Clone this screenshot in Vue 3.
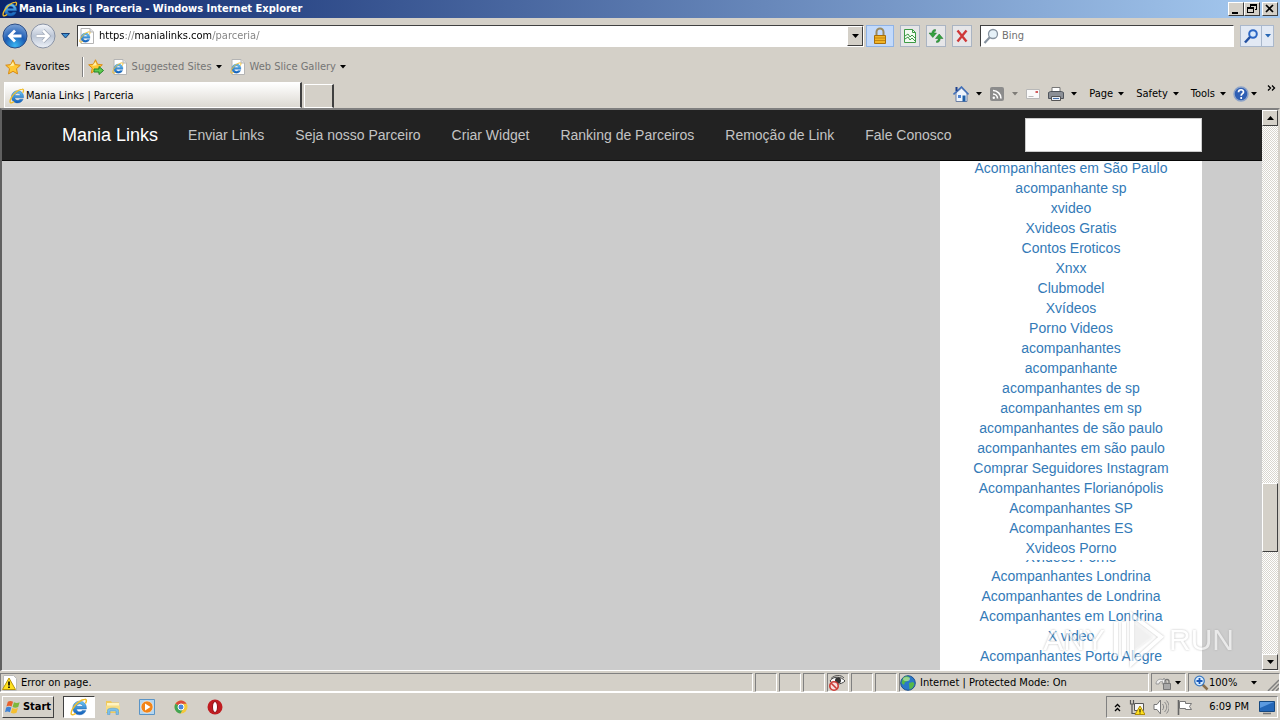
<template>
  <div class="window">
    <svg class="defs" aria-hidden="true">
      <defs>
        <linearGradient id="blueRing" x1="0" y1="0" x2="0" y2="1">
          <stop offset="0" stop-color="#6cc8f4" />
          <stop offset="1" stop-color="#0f5cb8" />
        </linearGradient>
        <radialGradient id="backFill" cx="0.5" cy="0.9" r="0.9">
          <stop offset="0" stop-color="#39b6f2" />
          <stop offset="0.5" stop-color="#1c5cb4" />
          <stop offset="1" stop-color="#7fa5d8" />
        </radialGradient>
        <linearGradient id="fwdFill" x1="0" y1="0" x2="0" y2="1">
          <stop offset="0" stop-color="#f4f6fa" />
          <stop offset="0.5" stop-color="#bcc6d6" />
          <stop offset="1" stop-color="#eef2f8" />
        </linearGradient>
        <symbol id="ie" viewBox="0 0 16 16">
          <path
            d="M14.600 9.800H5.800c.1 1.600 1.200 2.500 2.800 2.500 1.100 0 1.800-.4 2.200-1.100h3.300c-.8 2.400-2.900 3.700-5.500 3.700-3.700 0-6.100-2.500-6.100-6s2.600-6.100 6.100-6.100c3.700 0 6.200 2.700 6 7zM5.900 7.400h5.500c-.1-1.300-1.200-2.100-2.700-2.100S6.100 6.100 5.900 7.400z"
            fill="url(#blueRing)"
            stroke="#1a62b0"
            stroke-width="0.400"
          />
          <path
            d="M13.700 4.900c1.300-2.300 1.200-4-.6-3.800C9.500 1.400 4.300 5.800 2.200 9.900c-1.700 3.200-1.500 5.300.2 5 .8-.1 1.800-.6 2.700-1.300"
            fill="none"
            stroke="#f0bd2c"
            stroke-width="1.300"
          />
        </symbol>
        <symbol id="iePage" viewBox="0 0 16 16">
          <path d="M2 .5h9l3.500 3.500v11.500H2z" fill="#fff" stroke="#b4b4b4" />
          <path d="M11 .5V4h3.500" fill="#e4e4e4" stroke="#b4b4b4" />
          <use href="#ie" x="0" y="3" width="12" height="12" />
        </symbol>
        <symbol id="star" viewBox="0 0 16 16">
          <path
            d="M8 .8l2.200 4.800 5.100.6-3.800 3.500 1 5.200L8 12.300l-4.500 2.600 1-5.200L.7 6.200l5.100-.6z"
            fill="#ffc936"
            stroke="#d98a13"
          />
          <path d="M8 3l1.300 3.600-4.700.7z" fill="#fff0a8" />
        </symbol>
      </defs>
    </svg>

    <header class="title-bar">
      <svg class="icon16"><use href="#ie" /></svg>
      <h1>Mania Links | Parceria - Windows Internet Explorer</h1>
      <div class="win-buttons">
        <button type="button" aria-label="Minimize">
          <svg viewBox="0 0 14 12"><path d="M3 9h6v2H3z" /></svg>
        </button>
        <button type="button" aria-label="Restore">
          <svg viewBox="0 0 14 12">
            <path d="M5 1h7v6h-2V6h1V3H6v1H5zM2 4h7v6H2zm1 2v3h5V6z" fill-rule="evenodd" />
          </svg>
        </button>
        <button type="button" class="close" aria-label="Close">
          <svg viewBox="0 0 14 12">
            <path d="M3 2l7 7M10 2l-7 7" stroke="#000" stroke-width="1.700" />
          </svg>
        </button>
      </div>
    </header>

    <div class="address-row">
      <div class="travel">
        <button type="button" class="round" aria-label="Back">
          <svg viewBox="0 0 26 26">
            <circle cx="13" cy="13" r="12" fill="url(#backFill)" stroke="#2b4d86" />
            <path d="M19.500 13H8M13 7.500L7.500 13l5.500 5.500" fill="none" stroke="#fff" stroke-width="2.800" />
          </svg>
        </button>
        <button type="button" class="round" aria-label="Forward">
          <svg viewBox="0 0 26 26">
            <circle cx="13" cy="13" r="12" fill="url(#fwdFill)" stroke="#8992a4" />
            <path d="M6.500 13H18M13 7.500l5.500 5.500-5.500 5.500" fill="none" stroke="#a0a9b8" stroke-width="4" />
            <path d="M6.500 13H18M13 7.500l5.500 5.500-5.500 5.500" fill="none" stroke="#fff" stroke-width="2.500" />
          </svg>
        </button>
        <button type="button" class="recent" aria-label="Recent pages">
          <svg viewBox="0 0 9 6"><path d="M.5.5h8L4.500 5z" fill="#3c8fd0" stroke="#173e74" /></svg>
        </button>
      </div>

      <div class="address">
        <svg class="icon16"><use href="#iePage" /></svg>
        <input v-model="url" type="text" aria-label="Address" />
        <button type="button" class="combo" aria-label="Show addresses">
          <svg class="caret"><path d="M0 0h7L3.500 4z" /></svg>
        </button>
      </div>
      <button type="button" class="lock" aria-label="Security report">
        <svg viewBox="0 0 16 18">
          <path d="M4.500 9V5a3.500 3.500 0 017 0v4" fill="none" stroke="#9a8a60" stroke-width="2" />
          <path d="M2.500 8.500h11v8h-11z" fill="#f0b428" stroke="#a86f0c" />
          <path d="M3 11h10M3 13.500h10" stroke="#c4860f" />
        </svg>
      </button>
      <button type="button" class="tool" aria-label="Compatibility view">
        <svg viewBox="0 0 16 16">
          <path d="M2.500 1.500h8l3 3v10h-11z" fill="#f2fbf2" stroke="#3c9a45" />
          <path d="M10.500 1.500v3h3M3 8l3-2 2 3 2-2 3 3M3 11l3-2 2 3 2-2 3 3" fill="none" stroke="#3c9a45" />
        </svg>
      </button>
      <button type="button" class="tool" aria-label="Refresh">
        <svg viewBox="0 0 16 16">
          <path d="M7.500 1.500C5 1.500 4 3 4 5H1l3.800 4.500L8.500 5H6c0-1.200.5-1.800 1.500-1.800z" fill="#35a23f" stroke="#1d7228" stroke-width="0.500" />
          <path d="M8.500 14.500c2.500 0 3.700-1.500 3.700-4H15L11.200 6l-3.700 4.500h2.700c0 1.600-.5 2.400-1.700 2.400z" fill="#35a23f" stroke="#1d7228" stroke-width="0.500" />
        </svg>
      </button>
      <button type="button" class="tool" aria-label="Stop">
        <svg viewBox="0 0 16 16">
          <path d="M3.500 2.500l9 11M12.500 2.500l-9 11" stroke="#cf3838" stroke-width="2.400" />
        </svg>
      </button>
      <div class="search">
        <svg class="icon16" viewBox="0 0 16 16">
          <circle cx="10" cy="6" r="4.500" fill="#e6f1f8" stroke="#8793a0" stroke-width="1.300" />
          <path d="M6.800 9.200L1.500 15" stroke="#8793a0" stroke-width="2.200" />
        </svg>
        <input v-model="query" type="text" placeholder="Bing" aria-label="Search Bing" />
      </div>
      <div class="search-buttons">
        <button type="button" class="go" aria-label="Search">
          <svg viewBox="0 0 16 16">
            <circle cx="10" cy="6" r="3.800" fill="#d7e8fb" stroke="#2b66c4" stroke-width="2" />
            <path d="M7 9l-5 5.500" stroke="#2350a0" stroke-width="2.500" />
          </svg>
        </button>
        <button type="button" class="go-menu" aria-label="Search options">
          <svg class="caret small"><path d="M0 0h6L3 3.500z" fill="#2867b4" /></svg>
        </button>
      </div>
    </div>

    <div class="favorites-bar">
      <button type="button" class="fav">
        <svg class="icon16"><use href="#star" /></svg>Favorites
      </button>
      <span class="divider"></span>
      <button type="button" class="add-fav" aria-label="Add to Favorites bar">
        <svg class="icon16" viewBox="0 0 16 16">
          <use href="#star" width="15" height="15" />
          <path d="M6 10h5V7.500l4.500 4-4.500 4V13H6z" fill="#5ecb4f" stroke="#23842a" />
        </svg>
      </button>
      <a v-for="name in favorites" :key="name" href="#" class="fav-link" @click.prevent>
        <svg class="icon16"><use href="#iePage" /></svg>
        <span>{{ name }}</span>
        <svg class="caret small"><path d="M0 0h6L3 3.500z" /></svg>
      </a>
    </div>

    <div class="tab-row">
      <button type="button" class="tab">
        <svg class="icon16"><use href="#ie" /></svg>Mania Links | Parceria
      </button>
      <button type="button" class="new-tab" aria-label="New tab"></button>
      <div class="command-bar">
        <button type="button" aria-label="Home">
          <svg class="icon16" viewBox="0 0 16 16">
            <path d="M3 7v8.500h11V7L8.500 2z" fill="#eef4fc" stroke="#6a7ea4" />
            <path d="M.5 8.500L8.500 1l7 7.500" fill="none" stroke="#4370b8" stroke-width="1.600" />
            <path d="M2.500 1h2v4h-2z" fill="#1d3f8c" />
            <path d="M5 9h3v3H5z" fill="#4e83d0" />
            <path d="M9.500 9.500h3v6h-3z" fill="#1d5fa8" />
          </svg>
          <svg class="caret small"><path d="M0 0h6L3 3.500z" /></svg>
        </button>
        <button type="button" aria-label="Feeds">
          <svg class="icon16" viewBox="0 0 16 16">
            <rect x="1" y="1" width="14" height="14" rx="2" fill="#8c8c8c" />
            <path d="M4 4.500a8 8 0 018 8M4 8a4.500 4.500 0 014.500 4.500" fill="none" stroke="#fff" stroke-width="1.600" />
            <circle cx="4.800" cy="11.800" r="1.200" fill="#fff" />
          </svg>
          <svg class="caret small off"><path d="M0 0h6L3 3.500z" /></svg>
        </button>
        <button type="button" class="mail" aria-label="Read mail">
          <svg class="icon16" viewBox="0 0 16 16">
            <path d="M1.500 3.500h13v9h-13z" fill="#fafafa" stroke="#b8b8b8" />
            <path d="M10.500 5h2.500v2h-2.500z" fill="#d25c5c" />
            <path d="M3.500 10.500h5" stroke="#bbb" />
          </svg>
        </button>
        <button type="button" aria-label="Print">
          <svg class="icon16" viewBox="0 0 16 16">
            <path d="M4 1.500h8V6H4z" fill="#fff" stroke="#777" />
            <path d="M.5 6.500l2-1h11l2 1v6H.5z" fill="#8b8f96" stroke="#4f545c" />
            <path d="M3.500 10.500h9v4h-9z" fill="#e8eef6" stroke="#555" />
            <path d="M5 12.500h6" stroke="#456ea8" />
          </svg>
          <svg class="caret small"><path d="M0 0h6L3 3.500z" /></svg>
        </button>
        <button v-for="m in menus" :key="m" type="button" class="menu">
          <span>{{ m }}</span>
          <svg class="caret small"><path d="M0 0h6L3 3.500z" /></svg>
        </button>
        <button type="button" class="help" aria-label="Help">
          <svg class="icon16" viewBox="0 0 16 16">
            <circle cx="8" cy="8" r="7" fill="#2f5fb4" stroke="#8da3c8" stroke-width="1.500" />
            <path d="M5.500 6.200C5.600 3 10.600 3 10.500 6c0 1.700-2.300 1.700-2.300 3.800M8.200 11v2" fill="none" stroke="#fff" stroke-width="1.700" />
          </svg>
          <svg class="caret small"><path d="M0 0h6L3 3.500z" /></svg>
        </button>
        <button type="button" class="more" aria-label="More commands">
          <svg viewBox="0 0 9 6">
            <path d="M1 .5L3.500 3 1 5.500M5 .5L7.500 3 5 5.500" fill="none" stroke="#000" stroke-width="1.300" />
          </svg>
        </button>
      </div>
    </div>

    <div class="viewport">
      <main class="page">
        <nav class="navbar">
          <div class="container">
            <a href="#" class="brand" @click.prevent>Mania Links</a>
            <div class="nav-links">
              <a v-for="l in navLinks" :key="l" href="#" @click.prevent>{{ l }}</a>
            </div>
            <input v-model="siteQuery" type="text" class="site-search" aria-label="Buscar" />
          </div>
        </nav>
        <div class="container content">
          <aside class="partners">
            <a v-for="(p, i) in partners" :key="i" href="#" @click.prevent>{{ p }}</a>
            <div class="sliver"><a href="#" @click.prevent>Xvideos Porno</a></div>
            <a v-for="p in morePartners" :key="p" href="#" @click.prevent>{{ p }}</a>
          </aside>
        </div>
        <div class="watermark">
          <span>ANY</span>
          <svg viewBox="0 0 56 60">
            <path d="M7 12v34M15 12v34M23 5l29 22-29 26z" fill="none" stroke="#fff" stroke-width="4" />
            <path d="M25 12l19 15-19 14z" fill="#fff" opacity="0.500" />
          </svg>
          <span>RUN</span>
        </div>
      </main>
      <div class="scrollbar">
        <button type="button" aria-label="Scroll up">
          <svg class="caret"><path d="M0 4h7L3.500 0z" /></svg>
        </button>
        <span class="before"></span>
        <span class="thumb"></span>
        <span class="after"></span>
        <button type="button" aria-label="Scroll down">
          <svg class="caret"><path d="M0 0h7L3.500 4z" /></svg>
        </button>
      </div>
    </div>

    <footer class="status-bar">
      <div class="cell message">
        <svg class="icon16" viewBox="0 0 16 16">
          <path d="M1.500.5h10l3 3v12h-13z" fill="#fff" stroke="#bbb" />
          <path d="M7 3l6.500 11.500H.5z" fill="#ffe11e" stroke="#b89408" />
          <path d="M7 6.500v4M7 11.500v1.500" stroke="#000" stroke-width="1.600" />
        </svg>
        Error on page.
      </div>
      <div class="cell blank"></div>
      <div class="cell blank"></div>
      <div class="cell blank"></div>
      <div class="cell blank">
        <svg class="icon18" viewBox="0 0 18 16">
          <path d="M2 6c3-5 11-5 15 0-4 4-11 4-15 0z" fill="#fff" stroke="#444" />
          <circle cx="10" cy="5.500" r="3" fill="#333" />
          <path d="M3 3.500C7-.5 13-.5 16 3" fill="none" stroke="#555" />
          <circle cx="6" cy="11" r="4.200" fill="#f7dcdc" stroke="#cc3b35" stroke-width="1.600" />
          <path d="M3.200 8.200l5.600 5.600" stroke="#cc3b35" stroke-width="1.600" />
        </svg>
      </div>
      <div class="cell blank"></div>
      <div class="cell blank"></div>
      <div class="cell zone">
        <svg class="icon16" viewBox="0 0 16 16">
          <circle cx="8" cy="8" r="7.300" fill="#2a78c8" stroke="#1c4f8e" />
          <path d="M3 3c3-3 6-1.500 7 0L8 6 5 7 4 10 1.500 8zM9 8l4-1 1.500 2-2 4-3 1.500z" fill="#56b848" />
          <ellipse cx="6.500" cy="4" rx="3.500" ry="2" fill="#fff" opacity="0.400" />
        </svg>
        Internet | Protected Mode: On
      </div>
      <div class="cell privacy">
        <svg class="icon18" viewBox="0 0 18 16">
          <path d="M1 9c0-4 4-6 7-4l1-2 3 5-5 1 1-2C6 6 4 7 4 9z" fill="#f0f0f0" stroke="#999" />
          <path d="M8.500 8.500h7v6h-7z" fill="#a8a8a8" stroke="#777" />
          <path d="M10 8V6.500a2 2 0 014 0V8" fill="none" stroke="#777" stroke-width="1.300" />
        </svg>
        <svg class="caret small"><path d="M0 0h6L3 3.500z" /></svg>
      </div>
      <div class="cell zoom">
        <svg class="icon16" viewBox="0 0 16 16">
          <path d="M9 9l5.500 5.500" stroke="#8a6f4c" stroke-width="2.500" />
          <circle cx="6.500" cy="6" r="4.800" fill="#d8ecff" stroke="#3d7ac0" stroke-width="1.300" />
          <path d="M3.500 6h6M6.500 3v6" stroke="#1a58b8" stroke-width="1.800" />
        </svg>
        <span>100%</span>
        <svg class="caret small"><path d="M0 0h6L3 3.500z" /></svg>
        <svg class="grip" viewBox="0 0 12 12">
          <path d="M1 12L12 1M5 12l7-7M9 12l3-3" stroke="#808080" stroke-width="1.500" />
        </svg>
      </div>
    </footer>

    <div class="taskbar">
      <button type="button" class="start">
        <svg viewBox="0 0 18 16">
          <path d="M3 2.500c2-1.500 4-1 5.500 0L7 7.500c-2-1-3.500-1-5.500 0z" fill="#e8612c" />
          <path d="M9.500 3c2 1 4 1 6 0L14 8c-2 1-4 1-6 0z" fill="#7db83c" />
          <path d="M1.200 8.500c2-1 3.500-1 5.500 0l-1.500 5c-2-1-3.500-1-5.200 0z" fill="#3f82d4" />
          <path d="M7.700 9c2 1 4 1 6 0l-1.500 5c-2 1-4 1-6 0z" fill="#f5bf30" />
        </svg>
        Start
      </button>
      <button type="button" class="task active" aria-label="Internet Explorer">
        <svg viewBox="0 0 16 16"><use href="#ie" /></svg>
      </button>
      <button type="button" class="task" aria-label="Windows Explorer">
        <svg viewBox="0 0 16 16">
          <path d="M1 2h5l1 1.500h7V14H1z" fill="#efc95c" />
          <path d="M2 4h12v3H2z" fill="#fff3c0" />
          <path d="M1 6.500h14V13H1z" fill="#f7dd84" />
          <path d="M2.500 15.500V11c0-2.500 11-2.500 11 0v4.500H11V12H5v3.500z" fill="#7cc0ea" stroke="#4c97cc" stroke-width="0.500" />
        </svg>
      </button>
      <button type="button" class="task" aria-label="Media Player">
        <svg viewBox="0 0 16 16">
          <path d="M.5.5h15v15H.5z" fill="#b4d6f0" stroke="#5a94c6" />
          <circle cx="8" cy="8" r="6" fill="#f28418" stroke="#fff" stroke-width="0.500" />
          <path d="M6 4.500L11.500 8 6 11.500z" fill="#fff" />
        </svg>
      </button>
      <button type="button" class="task" aria-label="Chrome">
        <svg viewBox="0 0 16 16">
          <circle cx="8" cy="8" r="6.500" fill="#f4c83c" />
          <path d="M8 8L2.400 4.700A6.500 6.500 0 0113.600 4.800H8z" fill="#dc4a3c" />
          <path d="M8 8L2.400 4.700A6.500 6.500 0 007.500 14.500L10 10z" fill="#42a455" />
          <circle cx="8" cy="8" r="3" fill="#4a86dc" stroke="#fff" />
        </svg>
      </button>
      <button type="button" class="task" aria-label="Opera">
        <svg viewBox="0 0 16 16">
          <circle cx="8" cy="8" r="7.500" fill="#c01c20" />
          <ellipse cx="8" cy="8" rx="2.500" ry="5.500" fill="#fff" stroke="#8c1014" />
        </svg>
      </button>
      <div class="tray">
        <svg class="chevrons" viewBox="0 0 7 9">
          <path d="M1 4l2.500-2.500L6 4M1 8l2.500-2.500L6 8" fill="none" stroke="#000" stroke-width="1.300" />
        </svg>
        <svg class="icon16" viewBox="0 0 16 16">
          <path d="M5.500 4.500h9v7h-9z" fill="#f6f6f6" stroke="#555" />
          <path d="M1.500 1v4h3V1M3 5v9.500h5" fill="none" stroke="#555" stroke-width="1.200" />
          <path d="M11 7l5 8.500H6z" fill="#ffe11e" stroke="#b08c08" />
          <path d="M11 10v3M11 13.500v1" stroke="#000" />
        </svg>
        <svg class="icon16" viewBox="0 0 16 16">
          <path d="M1 5.500h3L7.500 1v14L4 10.500H1z" fill="#fff" stroke="#777" />
          <path d="M9.500 5c1.500 2 1.500 4 0 6M11.500 3c3 3 3 7 0 10M13.500 1.500c3.500 4 3.500 9 0 13" fill="none" stroke="#888" />
        </svg>
        <svg class="icon16" viewBox="0 0 16 16">
          <path d="M1.500 1v15" stroke="#666" stroke-width="1.600" />
          <path d="M2.500 2.500h6v2h6l-2 3 2 3h-6v-1h-6z" fill="#fff" stroke="#777" />
        </svg>
        <time>6:09 PM</time>
        <svg class="icon16" viewBox="0 0 16 16">
          <path d="M.5 2.500h15v10H.5z" fill="#2467b8" stroke="#154880" />
          <path d="M1 3h14L1 9z" fill="#5c9ae0" />
          <path d="M4 14.500h8" stroke="#777" stroke-width="1.500" />
        </svg>
      </div>
    </div>
  </div>
</template>

<script setup>
import { ref } from "vue";

const url = ref("https://manialinks.com/parceria/");
const query = ref("");
const siteQuery = ref("");

const favorites = ["Suggested Sites", "Web Slice Gallery"];
const menus = ["Page", "Safety", "Tools"];

const navLinks = [
  "Enviar Links",
  "Seja nosso Parceiro",
  "Criar Widget",
  "Ranking de Parceiros",
  "Remoção de Link",
  "Fale Conosco",
];

const partners = [
  "Acompanhantes em São Paulo",
  "acompanhante sp",
  "xvideo",
  "Xvideos Gratis",
  "Contos Eroticos",
  "Xnxx",
  "Clubmodel",
  "Xvídeos",
  "Porno Videos",
  "acompanhantes",
  "acompanhante",
  "acompanhantes de sp",
  "acompanhantes em sp",
  "acompanhantes de são paulo",
  "acompanhantes em são paulo",
  "Comprar Seguidores Instagram",
  "Acompanhantes Florianópolis",
  "Acompanhantes SP",
  "Acompanhantes ES",
  "Xvideos Porno",
];

const morePartners = [
  "Acompanhantes Londrina",
  "Acompanhantes de Londrina",
  "Acompanhantes em Londrina",
  "X video",
  "Acompanhantes Porto Alegre",
];
</script>

<style>
body {
  margin: 0;
  background: #d4d0c8;
}
</style>

<style scoped>
.window {
  display: flex;
  flex-direction: column;
  height: 100vh;
  overflow: hidden;
  background: #d4d0c8;
  color: #000;
  font-family: "DejaVu Sans Condensed", Tahoma, sans-serif;
  font-size: 11px;
  line-height: 14px;
}

.window * {
  box-sizing: border-box;
}

button,
input {
  margin: 0;
  padding: 0;
  border: none;
  background: none;
  color: inherit;
  font: inherit;
}

button {
  display: flex;
  align-items: center;
  justify-content: center;
  flex: none;
}

a {
  color: inherit;
  text-decoration: none;
}

svg {
  display: block;
  flex: none;
}

.defs {
  position: absolute;
  width: 0;
  height: 0;
}

.icon16 {
  width: 16px;
  height: 16px;
}

.icon18 {
  width: 18px;
  height: 16px;
}

.caret {
  width: 7px;
  height: 4px;
}

.caret.small {
  width: 6px;
}

.caret.off {
  opacity: 0.4;
}

/* title bar */
.title-bar {
  display: flex;
  align-items: center;
  flex: none;
  height: 18px;
  padding: 0 2px;
  background: linear-gradient(90deg, #0a246a, #a6caf0);
  color: #fff;
}

.title-bar h1 {
  flex: 1;
  margin: 0;
  padding-left: 1px;
  font-size: 11px;
  font-weight: bold;
}

.win-buttons {
  display: flex;
}

.win-buttons button {
  width: 16px;
  height: 14px;
  border: 1px solid;
  border-color: #fff #404040 #404040 #fff;
  background: #d4d0c8;
}

.win-buttons svg {
  width: 14px;
  height: 12px;
}

.win-buttons .close {
  margin-left: 2px;
}

/* address row */
.address-row {
  display: flex;
  align-items: center;
  flex: none;
  gap: 6px;
  height: 35px;
  padding: 0 6px 0 2px;
}

.travel {
  display: flex;
  align-items: center;
  gap: 2px;
}

.round svg {
  width: 26px;
  height: 26px;
}

.recent {
  width: 14px;
}

.recent svg {
  width: 9px;
  height: 6px;
}

.address,
.search {
  display: flex;
  align-items: center;
  height: 22px;
  border: 1px solid;
  border-color: #404040 #fff #fff #404040;
  background: #fff;
}

.address {
  flex: 1;
  margin: 0 -4px 0 -1px;
  padding-left: 1px;
}

.address input {
  flex: 1;
  margin-left: 4px;
  color: transparent;
  /* only the scheme and the domain stay black */
  background: linear-gradient(
    90deg,
    #000 26px,
    #808080 26px,
    #808080 36px,
    #000 36px,
    #000 112px,
    #808080 112px
  );
  background-clip: text;
  -webkit-background-clip: text;
}

.combo {
  width: 16px;
  height: 20px;
  border: 1px solid;
  border-color: #fff #404040 #404040 #fff;
  background: #d4d0c8;
}

.lock {
  width: 28px;
  height: 22px;
  border: 1px solid #8fb3e6;
  background: #c3dafb;
}

.lock svg {
  width: 16px;
  height: 18px;
}

.tool {
  width: 20px;
  height: 22px;
  border: 1px solid #aab4c2;
  background: #e6e6e8;
}

.tool svg,
.go svg {
  width: 16px;
  height: 16px;
}

.search {
  width: 254px;
  margin-left: 2px;
  padding-left: 2px;
}

.search input {
  flex: 1;
  margin-left: 3px;
}

.search input::placeholder {
  color: #707070;
  opacity: 1;
}

.search-buttons {
  display: flex;
  border: 1px solid #aab8cc;
  background: #e2e9f4;
}

.go {
  width: 20px;
  height: 20px;
}

.go-menu {
  width: 12px;
  border-left: 1px solid #aab8cc;
}

/* favorites bar */
.favorites-bar {
  display: flex;
  align-items: center;
  flex: none;
  height: 27px;
  padding-left: 5px;
}

.fav {
  gap: 4px;
}

.divider {
  width: 2px;
  height: 20px;
  margin-left: 12px;
  border-left: 1px solid #808080;
  border-right: 1px solid #fff;
}

.add-fav {
  margin-left: 4px;
}

.fav-link {
  display: flex;
  align-items: center;
  gap: 4px;
  margin-left: 8px;
  color: #757575;
}

/* tabs and command bar */
.tab-row {
  display: flex;
  align-items: flex-end;
  flex: none;
  height: 28px;
  padding-left: 4px;
}

.tab {
  justify-content: flex-start;
  width: 298px;
  height: 26px;
  padding: 2px 0 0 4px;
  gap: 1px;
  border: 1px solid #fff;
  border-right: 2px solid #404040;
  background: linear-gradient(#fff, #dcd9d2);
}

.new-tab {
  width: 30px;
  height: 24px;
  margin-left: 2px;
  border: 1px solid #fff;
  border-right: 2px solid #404040;
}

.command-bar {
  display: flex;
  flex: 1;
  align-items: center;
  justify-content: flex-end;
  height: 28px;
  padding-right: 4px;
  gap: 7px;
}

.command-bar button {
  gap: 7px;
}

.command-bar .menu {
  gap: 5px;
  margin-left: 5px;
}

.command-bar .help {
  gap: 2px;
}

.command-bar .more {
  align-self: flex-start;
  margin-left: 3px;
  padding-top: 5px;
}

.more svg {
  width: 9px;
  height: 6px;
}

/* page */
.viewport {
  display: flex;
  flex: 1;
  min-height: 0;
  border: 2px solid;
  border-color: #808080 #d4d0c8 #fff #606060;
  border-bottom-width: 1px;
}

.page {
  position: relative;
  flex: 1;
  overflow: hidden;
  background: #ccc;
  font-family: "Liberation Sans", Arial, sans-serif;
  font-size: 14px;
  line-height: 20px;
}

.navbar {
  position: relative;
  z-index: 1;
  border-bottom: 1px solid #080808;
  background: #222;
}

.container {
  display: flex;
  max-width: 1170px;
  margin: 0 auto;
  padding: 0 15px;
}

.navbar .container {
  align-items: center;
  height: 50px;
}

.brand {
  margin-right: 30px;
  color: #fff;
  font-size: 18px;
}

.nav-links {
  display: flex;
  gap: 31px;
  color: #c4c4c4;
}

.site-search {
  width: 177px;
  height: 34px;
  margin-left: auto;
  padding: 6px 12px;
  border: 1px solid #ccc;
  background: #fff;
  color: #555;
}

.content {
  justify-content: flex-end;
  margin-top: -3px;
}

.partners {
  width: 262px;
  padding-bottom: 20px;
  background: #fff;
  color: #337ab7;
  text-align: center;
}

.partners > a {
  display: block;
}

.sliver {
  display: flex;
  align-items: flex-end;
  justify-content: center;
  height: 2px;
  margin: 2px 0 4px;
  overflow: hidden;
  line-height: 10px;
}

.watermark {
  position: absolute;
  right: 28px;
  bottom: 0;
  z-index: 2;
  display: flex;
  align-items: center;
  gap: 4px;
  color: #fff;
  font-size: 30px;
  line-height: 60px;
  opacity: 0.6;
  filter: drop-shadow(0 0 1px #999);
  pointer-events: none;
}

.watermark svg {
  width: 56px;
  height: 60px;
}

/* scrollbar */
.scrollbar {
  display: flex;
  flex-direction: column;
  width: 16px;
  background: repeating-conic-gradient(#fff 0 25%, #d9d6cf 0 50%) 0 0 / 2px 2px;
}

.scrollbar button,
.thumb {
  height: 16px;
  border: 1px solid;
  border-color: #fff #404040 #404040 #fff;
  background: #d4d0c8;
}

.before {
  flex: 358;
}

.thumb {
  flex: 68;
}

.after {
  flex: 102;
}

/* status bar */
.status-bar {
  display: flex;
  flex: none;
  gap: 2px;
  height: 22px;
  padding-top: 2px;
  border-bottom: 1px solid #fff;
}

.cell {
  display: flex;
  align-items: center;
  padding-top: 1px;
  border: 1px solid;
  border-color: #808080 #fff #fff #808080;
}

.message {
  flex: 1;
  padding-left: 1px;
  gap: 3px;
}

.blank {
  width: 22px;
}

.zone {
  width: 250px;
  gap: 4px;
}

.privacy {
  width: 35px;
  padding-left: 3px;
  gap: 2px;
}

.zoom {
  width: 92px;
  padding-left: 4px;
}

.zoom .caret {
  margin-left: 14px;
}

.grip {
  align-self: flex-end;
  width: 12px;
  height: 12px;
  margin-left: auto;
}

/* taskbar */
.taskbar {
  display: flex;
  align-items: center;
  flex: none;
  height: 27px;
  padding: 1px 2px 0;
}

.start {
  width: 52px;
  height: 22px;
  margin-right: 9px;
  border: 1px solid;
  border-color: #fff #404040 #404040 #fff;
  gap: 1px;
  font-weight: bold;
}

.start svg {
  width: 17px;
  height: 16px;
}

.task {
  width: 34px;
  height: 22px;
}

.task svg {
  width: 16px;
  height: 16px;
}

.task.active {
  width: 32px;
  margin-right: 1px;
  border: 1px solid;
  border-color: #404040 #fff #fff #404040;
  background: #fff;
}

.task.active svg {
  width: 18px;
  height: 18px;
}

.tray {
  display: flex;
  align-items: center;
  height: 22px;
  margin-left: auto;
  padding: 0 2px 0 7px;
  gap: 8px;
  border: 1px solid;
  border-color: #808080 #fff #fff #808080;
}

.chevrons {
  width: 7px;
  height: 9px;
}

.tray time {
  margin: 0 2px 0 8px;
}
</style>
